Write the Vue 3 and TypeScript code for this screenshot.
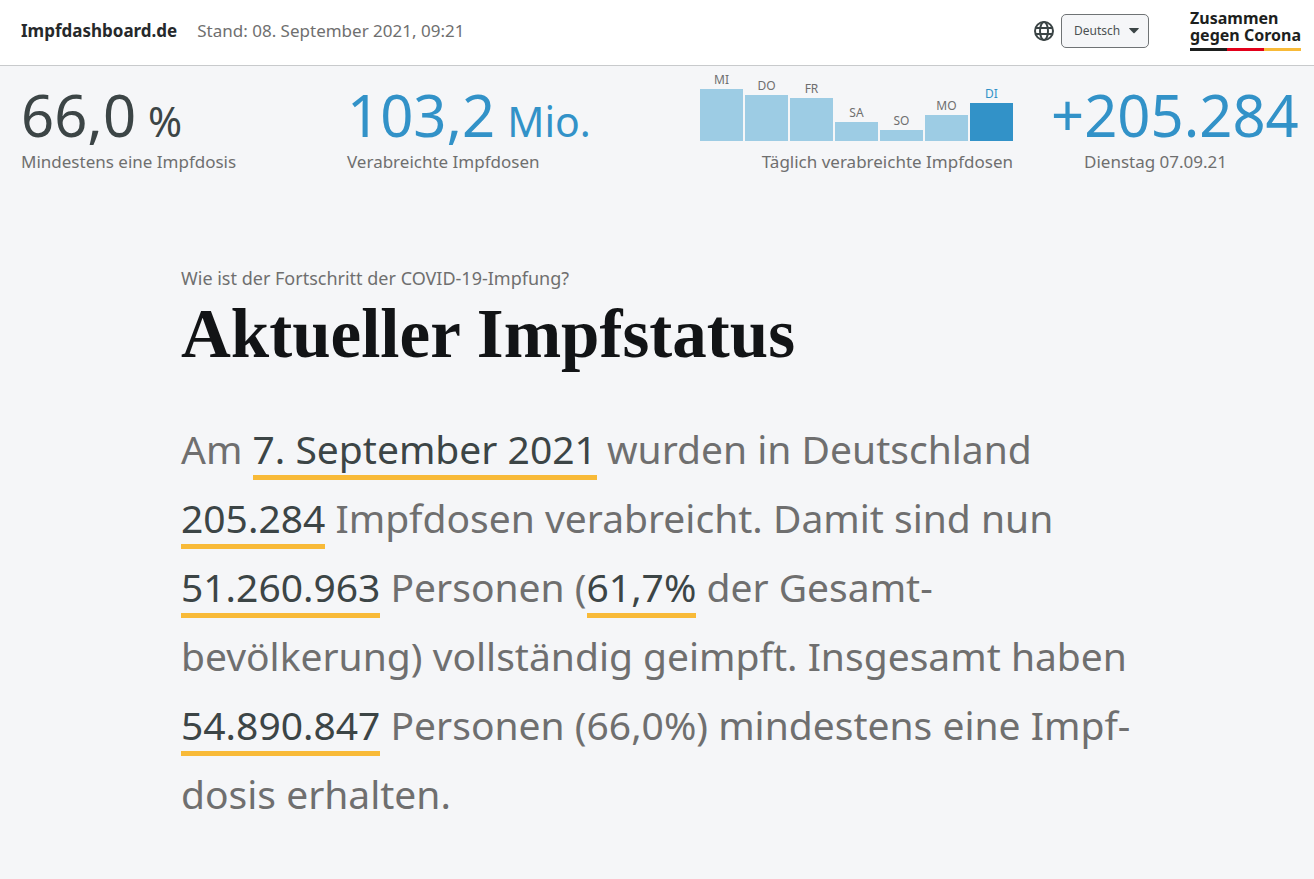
<script setup lang="ts">
import { ref } from 'vue'

interface DayBar {
  day: string
  height: number
  active?: boolean
}

const language = ref('de')

const week: DayBar[] = [
  { day: 'MI', height: 52 },
  { day: 'DO', height: 46 },
  { day: 'FR', height: 43 },
  { day: 'SA', height: 19 },
  { day: 'SO', height: 11 },
  { day: 'MO', height: 26 },
  { day: 'DI', height: 38, active: true },
]
</script>

<template>
  <div class="page">
    <header class="topbar">
      <a class="brand" href="#">Impfdashboard.de</a>
      <span class="updated">Stand: 08. September 2021, 09:21</span>
      <label class="lang-label" for="language" aria-label="Sprache">
        <svg width="20" height="20" viewBox="0 0 20 20" fill="none" stroke="#3c4546" stroke-width="2" aria-hidden="true">
          <circle cx="10" cy="10" r="9" />
          <ellipse cx="10" cy="10" rx="4" ry="9" />
          <path d="M1.8 7h16.4M1.8 13h16.4" />
        </svg>
      </label>
      <div class="select-wrap">
        <select id="language" v-model="language">
          <option value="de">Deutsch</option>
          <option value="en">English</option>
        </select>
        <svg class="caret" width="10" height="6" viewBox="0 0 10 6" aria-hidden="true">
          <path d="M0.6 0h8.8q.8 0 .3.7L5.6 5q-.6.6-1.2 0L.3.7Q-.2 0 .6 0z" fill="#3c4546" />
        </svg>
      </div>
      <a class="logo" href="#">
        <span>Zusammen</span>
        <span>gegen Corona</span>
        <span class="flag"><i class="black"></i><i class="red"></i><i class="gold"></i></span>
      </a>
    </header>

    <section class="stats">
      <div class="stat first">
        <div class="value">66,0 <small>%</small></div>
        <div class="caption">Mindestens eine Impfdosis</div>
      </div>
      <div class="stat doses blue">
        <div class="value">103,2 <small>Mio.</small></div>
        <div class="caption">Verabreichte Impfdosen</div>
      </div>
      <div class="stat week">
        <div class="chart">
          <div v-for="d in week" :key="d.day" class="day" :class="{ active: d.active }">
            <span>{{ d.day }}</span>
            <div class="bar" :style="{ height: d.height + 'px' }"></div>
          </div>
        </div>
        <div class="caption">Täglich verabreichte Impfdosen</div>
      </div>
      <div class="stat latest blue">
        <div class="value">+205.284</div>
        <div class="caption">Dienstag 07.09.21</div>
      </div>
    </section>

    <main class="content">
      <p class="kicker">Wie ist der Fortschritt der COVID-19-Impfung?</p>
      <h1>Aktueller Impfstatus</h1>
      <p class="lead">
        Am <b>7. September 2021</b> wurden in Deutschland<br />
        <b>205.284</b> Impfdosen verabreicht. Damit sind nun<br />
        <b>51.260.963</b> Personen (<b>61,7%</b> der Gesamt-<br />
        bevölkerung) vollständig geimpft. Insgesamt haben<br />
        <b>54.890.847</b> Personen (66,0%) mindestens eine Impf-<br />
        dosis erhalten.
      </p>
    </main>
  </div>
</template>

<style>
body {
  margin: 0;
  background: #f5f6f8;
}
</style>

<style scoped>
.page {
  min-height: 100vh;
  background: #f5f6f8;
  color: #6f6f6f;
  font-family: "Noto Sans", sans-serif;
}
a {
  color: inherit;
  text-decoration: none;
}
.topbar {
  box-sizing: border-box;
  display: flex;
  align-items: center;
  height: 66px;
  padding: 0 13px 4px 21px;
  background: #fff;
  border-bottom: 1px solid #c8cacc;
  white-space: nowrap;
}
.brand {
  margin-right: 20px;
  color: #26292b;
  font-size: 17px;
  font-weight: 700;
}
.updated {
  font-size: 17px;
}
.lang-label {
  display: flex;
  margin-left: auto;
  margin-right: 7px;
}
.select-wrap {
  display: grid;
  align-items: center;
  width: 88px;
  margin-right: 41px;
}
.select-wrap > * {
  grid-area: 1 / 1;
}
select {
  width: 100%;
  height: 34px;
  padding: 0 12px;
  appearance: none;
  border: 1px solid #6f7375;
  border-radius: 5px;
  background: #f5f6f8;
  color: #4b5152;
  font-family: inherit;
  font-size: 12px;
}
.caret {
  justify-self: end;
  margin-right: 10px;
  pointer-events: none;
}
.logo {
  display: flex;
  flex-direction: column;
  width: 111px;
  color: #1d1f1e;
  font-size: 16px;
  font-weight: 700;
  line-height: 17px;
}
.flag {
  display: flex;
  height: 3px;
  margin-top: 4px;
}
.flag i {
  flex: 1;
}
.black {
  background: #1d1f1e;
}
.red {
  background: #e2001a;
}
.gold {
  background: #f8ba38;
}
.stats {
  display: flex;
  height: 112px;
  padding: 0 16px 0 21px;
  white-space: nowrap;
}
.stat {
  display: flex;
  flex-direction: column;
}
.first {
  flex: 326;
  color: #3c4546;
}
.doses {
  flex: 353;
}
.blue {
  color: #3292c8;
}
.value {
  display: flex;
  align-items: baseline;
  gap: 12px;
  height: 59px;
  padding-top: 19px;
  font-size: 58px;
  line-height: 60px;
}
.value small {
  font-size: 41px;
}
.caption {
  margin-top: 5px;
  color: #6f6f6f;
  font-size: 17px;
  line-height: 26px;
}
.week {
  width: 313px;
  margin-right: 38px;
}
.week .caption {
  text-align: right;
}
.chart {
  display: flex;
  align-items: flex-end;
  gap: 2px;
  height: 75px;
  padding-bottom: 3px;
}
.day {
  flex: 1;
  font-size: 12px;
  line-height: 18px;
  text-align: center;
}
.bar {
  background: #9dcce4;
}
.active {
  color: #3292c8;
}
.active .bar {
  background: #3292c8;
}
.latest {
  width: 247px;
}
.latest .caption {
  padding-left: 33px;
}
.content {
  padding: 87px 21px 40px 181px;
  white-space: nowrap;
}
p,
h1 {
  margin: 0;
}
.kicker {
  font-size: 18px;
  line-height: 26px;
}
h1 {
  color: #121416;
  font-family: "Liberation Serif", serif;
  font-size: 69px;
  font-weight: 700;
  line-height: 86px;
}
.lead {
  margin-top: 37px;
  font-size: 39px;
  line-height: 69px;
}
.lead b {
  color: #3c4546;
  font-weight: 400;
  border-bottom: 5px solid #f8ba38;
}
</style>
